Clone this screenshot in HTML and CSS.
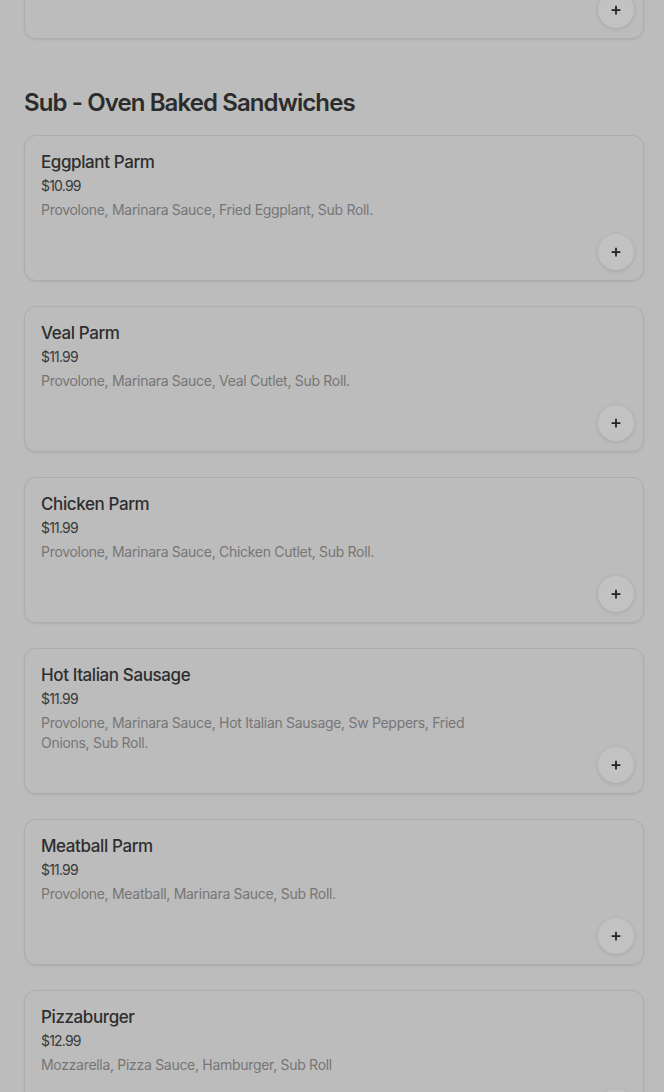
FILE: index.html
```html
<!DOCTYPE html>
<html lang="en">
<head>
  <meta charset="UTF-8">
  <meta name="viewport" content="width=device-width, initial-scale=1.0">
  <title>Menu</title>
  <link rel="stylesheet" href="styles.css">
</head>
<body>
  <div class="menu">
    <div class="item-card item-card-cut">
      <div class="item-info"></div>
      <button class="add-btn" aria-label="Add">
        <svg viewBox="0 0 16 16"><path d="M8 3v10M3 8h10"></path></svg>
      </button>
    </div>

    <h2 class="section-title">Sub - Oven Baked Sandwiches</h2>

    <div class="item-list">
      <div class="item-card">
        <div class="item-info">
          <h3 class="item-name">Eggplant Parm</h3>
          <p class="item-price">$10.99</p>
          <p class="item-desc">Provolone, Marinara Sauce, Fried Eggplant, Sub Roll.</p>
        </div>
        <button class="add-btn" aria-label="Add">
          <svg viewBox="0 0 16 16"><path d="M8 3v10M3 8h10"></path></svg>
        </button>
      </div>

      <div class="item-card">
        <div class="item-info">
          <h3 class="item-name">Veal Parm</h3>
          <p class="item-price">$11.99</p>
          <p class="item-desc">Provolone, Marinara Sauce, Veal Cutlet, Sub Roll.</p>
        </div>
        <button class="add-btn" aria-label="Add">
          <svg viewBox="0 0 16 16"><path d="M8 3v10M3 8h10"></path></svg>
        </button>
      </div>

      <div class="item-card">
        <div class="item-info">
          <h3 class="item-name">Chicken Parm</h3>
          <p class="item-price">$11.99</p>
          <p class="item-desc">Provolone, Marinara Sauce, Chicken Cutlet, Sub Roll.</p>
        </div>
        <button class="add-btn" aria-label="Add">
          <svg viewBox="0 0 16 16"><path d="M8 3v10M3 8h10"></path></svg>
        </button>
      </div>

      <div class="item-card">
        <div class="item-info">
          <h3 class="item-name">Hot Italian Sausage</h3>
          <p class="item-price">$11.99</p>
          <p class="item-desc">Provolone, Marinara Sauce, Hot Italian Sausage, Sw Peppers, Fried Onions, Sub Roll.</p>
        </div>
        <button class="add-btn" aria-label="Add">
          <svg viewBox="0 0 16 16"><path d="M8 3v10M3 8h10"></path></svg>
        </button>
      </div>

      <div class="item-card">
        <div class="item-info">
          <h3 class="item-name">Meatball Parm</h3>
          <p class="item-price">$11.99</p>
          <p class="item-desc">Provolone, Meatball, Marinara Sauce, Sub Roll.</p>
        </div>
        <button class="add-btn" aria-label="Add">
          <svg viewBox="0 0 16 16"><path d="M8 3v10M3 8h10"></path></svg>
        </button>
      </div>

      <div class="item-card">
        <div class="item-info">
          <h3 class="item-name">Pizzaburger</h3>
          <p class="item-price">$12.99</p>
          <p class="item-desc">Mozzarella, Pizza Sauce, Hamburger, Sub Roll</p>
        </div>
        <button class="add-btn" aria-label="Add">
          <svg viewBox="0 0 16 16"><path d="M8 3v10M3 8h10"></path></svg>
        </button>
      </div>
    </div>
  </div>
</body>
</html>
```

FILE: styles.css
```css
body {
  margin: 0;
  background: #bcbcbc;
  font-family: Inter, "Noto Sans", sans-serif;
  color: #2f2f2f;
  overflow: hidden;
}

.menu {
  padding: 0 20px 0 24px;
}

.item-list {
  display: flex;
  flex-direction: column;
  gap: 25px;
}

.item-card {
  position: relative;
  box-sizing: border-box;
  height: 146px;
  border: 1px solid #acacac;
  border-radius: 12px;
  box-shadow: 0 1px 2px rgba(0, 0, 0, 0.08);
  padding: 14px 9px 9px 16px;
}

.item-card-cut {
  margin-top: -107px;
}

.item-info {
  max-width: 430px;
}

.section-title {
  margin: 48px 0 16px;
  font-size: 24px;
  line-height: 32px;
  font-weight: 600;
  letter-spacing: -0.9px;
  color: #2c2c2c;
}

.item-name {
  margin: 0;
  font-size: 17px;
  line-height: 24px;
  font-weight: 500;
  letter-spacing: -0.4px;
  color: #2e2e2e;
}

.item-price {
  margin: 2px 0 0;
  font-size: 14px;
  line-height: 20px;
  color: #3a3a3a;
  letter-spacing: -0.8px;
}

.item-desc {
  margin: 4px 0 0;
  font-size: 14px;
  line-height: 20px;
  letter-spacing: -0.3px;
  color: #767676;
}

.add-btn {
  position: absolute;
  right: 9px;
  bottom: 10px;
  width: 36px;
  height: 36px;
  padding: 0;
  border: none;
  border-radius: 50%;
  background: #c2c2c2;
  box-shadow: 0 1px 4px rgba(0, 0, 0, 0.12);
  display: flex;
  align-items: center;
  justify-content: center;
}

.add-btn svg {
  width: 14px;
  height: 14px;
  fill: none;
  stroke: #222;
  stroke-width: 2;
}
```
